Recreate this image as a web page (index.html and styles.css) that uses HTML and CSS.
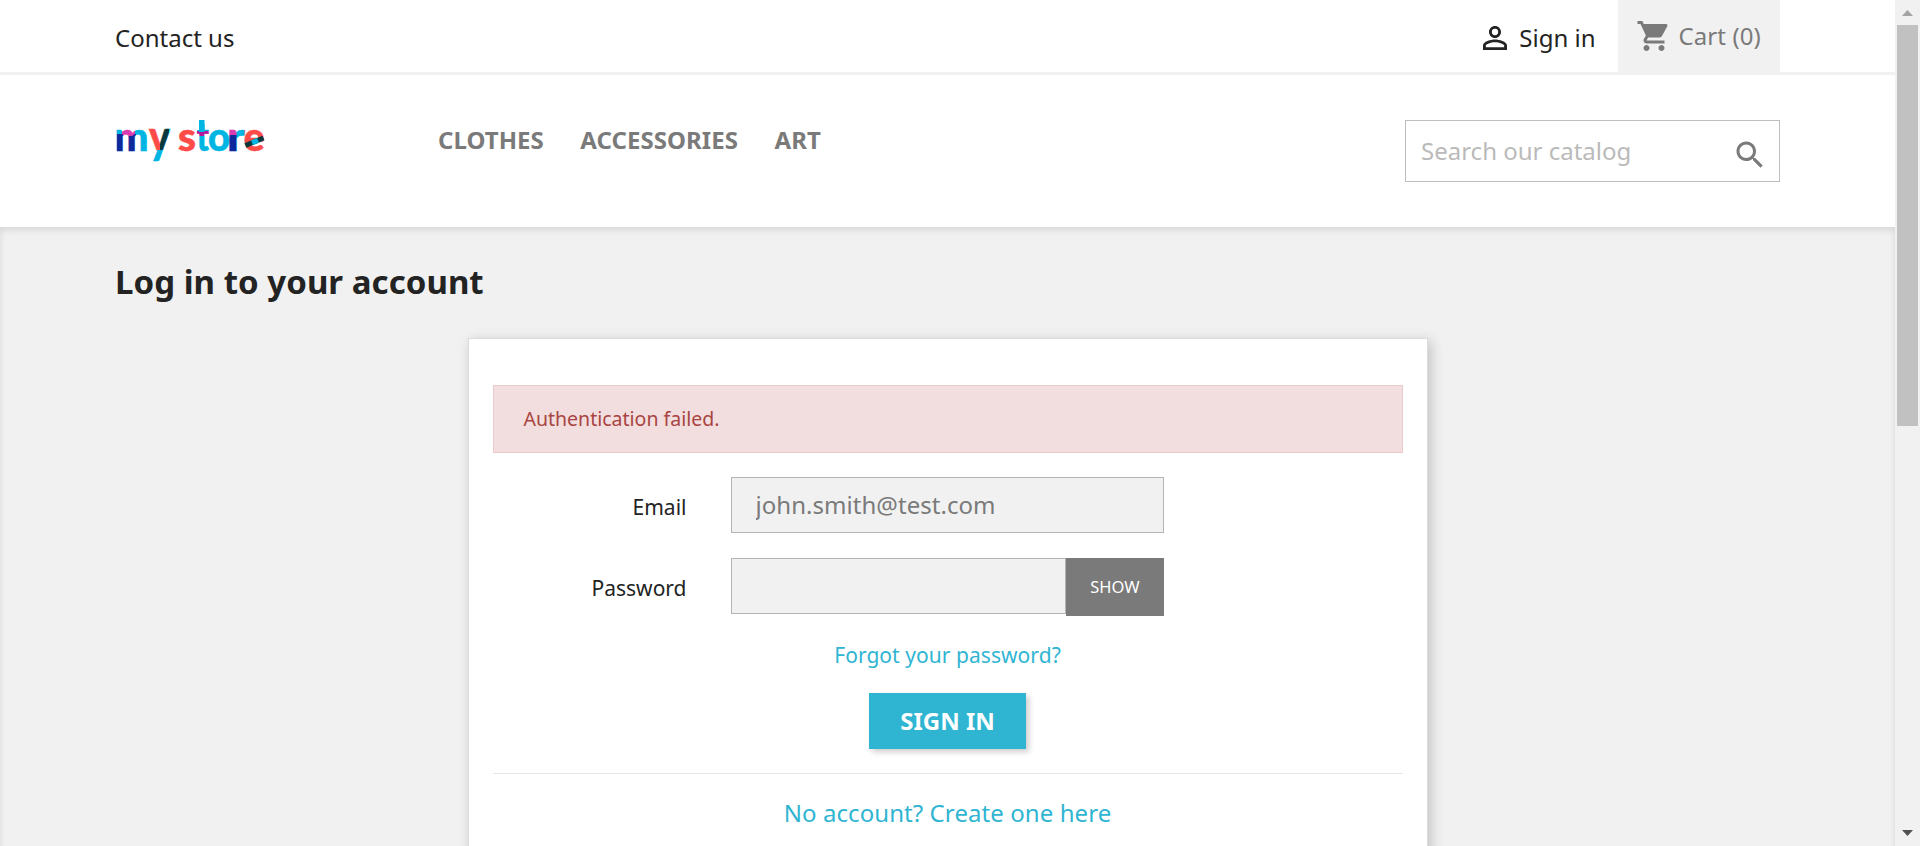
FILE: index.html
```html
<!DOCTYPE html>
<html lang="en">
<head>
<meta charset="utf-8">
<title>Login</title>
<link rel="stylesheet" href="styles.css">
</head>
<body>
<div class="viewport">
  <div class="page">
    <header class="header">
      <nav class="topbar">
        <a class="contact">Contact us</a>
        <div class="user">
          <a class="signin">
            <svg class="icon" viewBox="0 0 24 24"><path d="M12 5.9a2.1 2.1 0 1 1 0 4.2 2.1 2.1 0 0 1 0-4.2m0 9c2.970 0 6.100 1.460 6.100 2.100v1.100H5.900V17c0-.640 3.130-2.100 6.100-2.100M12 4C9.790 4 8 5.790 8 8s1.790 4 4 4 4-1.790 4-4-1.790-4-4-4zm0 9c-2.670 0-8 1.340-8 4v3h16v-3c0-2.660-5.330-4-8-4z"/></svg>
            <span>Sign in</span>
          </a>
          <a class="cart">
            <svg class="icon" viewBox="0 0 24 24"><path d="M7 18c-1.100 0-1.990.9-1.990 2S5.900 22 7 22s2-.9 2-2-.9-2-2-2zM1 2v2h2l3.600 7.590-1.350 2.450c-.160.280-.250.610-.250.960 0 1.100.9 2 2 2h12v-2H7.420c-.140 0-.250-.110-.250-.250l.030-.120.900-1.630h7.450c.750 0 1.410-.410 1.750-1.030l3.580-6.490c.080-.140.120-.310.120-.480 0-.550-.450-1-1-1H5.210l-.940-2H1zm16 16c-1.100 0-1.990.9-1.990 2s.890 2 1.990 2 2-.9 2-2-.9-2-2-2z"/></svg>
            <span>Cart (0)</span>
          </a>
        </div>
      </nav>
      <div class="mainbar">
        <svg class="logo" viewBox="0 0 150 60" role="img" aria-label="my store">
          <defs>
            <pattern id="ink" patternUnits="userSpaceOnUse" width="150" height="60">
              <rect width="150" height="60" fill="#00b5e2"/>
              <rect x="2" y="14" width="8" height="18" fill="#0c2a9c"/>
              <rect x="13" y="14" width="8" height="18" fill="#0c2a9c"/>
              <path d="M7 9h13v5l-3 2H9l-2-2z" fill="#d93cae"/>
              <rect x="33" y="8" width="12" height="22" fill="#ff4b47"/>
              <path d="M45 8h9v16l-5 6h-4z" fill="#07393f"/>
              <rect x="62" y="8" width="19" height="26" fill="#ff4b47"/>
              <rect x="82" y="11" width="12" height="5" fill="#b4199c"/>
              <rect x="114" y="15" width="7.500" height="20" fill="#0c2a9c"/>
              <rect x="114" y="8" width="7.500" height="7" fill="#d93cae"/>
              <rect x="129.500" y="8" width="20.500" height="26" fill="#ff4b47"/>
            </pattern>
          </defs>
          <g class="logo-text" fill="url(#ink)" stroke="url(#ink)">
            <text x="-0.500" y="30.500" textLength="34" lengthAdjust="spacingAndGlyphs">m</text>
            <text class="logo-y" x="34" y="33" textLength="21" lengthAdjust="spacingAndGlyphs">y</text>
            <text x="63" y="30.500" textLength="18" lengthAdjust="spacingAndGlyphs">s</text>
            <text x="81.500" y="30.500" textLength="12.500" lengthAdjust="spacingAndGlyphs">t</text>
            <text x="93" y="30.500" textLength="22" lengthAdjust="spacingAndGlyphs">o</text>
            <text x="112" y="30.500" textLength="18" lengthAdjust="spacingAndGlyphs">r</text>
            <text x="128.500" y="30.500" textLength="21" lengthAdjust="spacingAndGlyphs">e</text>
          </g>
          <path d="M84 0h5.500v12H84z" fill="#00b5e2"/>
          <path d="M130.500 25.500l18-7.500" stroke="#07393f" stroke-width="5"/>
          <path d="M137 22.800l6-2.500" stroke="#00b5e2" stroke-width="5"/>
        </svg>
        <ul class="menu">
          <li>CLOTHES</li>
          <li>ACCESSORIES</li>
          <li>ART</li>
        </ul>
        <form class="search">
          <input class="search-input" type="text" placeholder="Search our catalog" aria-label="Search">
          <svg class="icon" viewBox="0 0 24 24"><path d="M15.500 14h-.790l-.280-.270C15.410 12.590 16 11.110 16 9.500 16 5.910 13.090 3 9.500 3S3 5.910 3 9.500 5.910 16 9.500 16c1.610 0 3.090-.590 4.230-1.570l.270.280v.790l5 4.990L20.490 19l-4.990-5zm-6 0C7.010 14 5 11.990 5 9.500S7.010 5 9.500 5 14 7.010 14 9.500 11.990 14 9.500 14z"/></svg>
        </form>
      </div>
    </header>
    <main class="wrapper">
      <h1 class="title">Log in to your account</h1>
      <section class="card">
        <div class="alert">Authentication failed.</div>
        <form class="login">
          <label class="label" for="email">Email</label>
          <input class="field" id="email" type="text" value="john.smith@test.com">
          <label class="label" for="password">Password</label>
          <div class="group">
            <input class="field" id="password" type="password">
            <button class="show" type="button">SHOW</button>
          </div>
        </form>
        <a class="forgot">Forgot your password?</a>
        <button class="submit" type="button">SIGN IN</button>
        <hr class="rule">
        <a class="create">No account? Create one here</a>
      </section>
    </main>
  </div>
  <div class="scrollbar">
    <svg class="arrow arrow-up" viewBox="0 0 11 6"><path d="M0 6L5.500 0 11 6z"/></svg>
    <div class="thumb"></div>
    <svg class="arrow arrow-down" viewBox="0 0 11 6"><path d="M0 0L5.500 6 11 0z"/></svg>
  </div>
</div>
</body>
</html>
```

FILE: styles.css
```css
* { box-sizing: border-box; }

body {
  margin: 0;
  background: #f1f1f1;
  color: #232323;
  font-family: "Noto Sans", sans-serif;
  font-size: 24px;
  line-height: 30px;
}

input, button { font-family: inherit; border-radius: 0; margin: 0; }

.viewport { display: flex; height: 846px; overflow: hidden; }
.page { width: 1895px; height: 846px; overflow: hidden; display: flex; flex-direction: column; }

.header { background: #fff; flex: none; }
.icon { width: 36px; height: 36px; fill: currentColor; flex: none; }

.topbar {
  display: flex;
  justify-content: space-between;
  height: 75px;
  padding: 0 115px;
  border-bottom: 3px solid #f1f1f1;
}
.contact { padding-top: 23px; }
.user { display: flex; }
.signin { display: flex; padding: 23px 22.5px 0 0; }
.signin .icon { margin: -3px 6.5px 0 0; }
.cart {
  display: flex;
  width: 162px;
  height: 72px;
  padding: 21px 0 0 18px;
  background: #f1f1f1;
  color: #7a7a7a;
}
.cart .icon { margin: -3px 6.5px 0 0; }
.cart span { letter-spacing: 0.1px; }

.mainbar { display: flex; height: 152px; padding: 45px 115px 0; }
.logo { width: 150px; height: 60px; margin: 0 172px 0 0; overflow: visible; }
.logo-text { font: 900 39px/1 "Lato", sans-serif; stroke-width: 0.5px; }
.logo-y { font-size: 45px; }
.menu {
  display: flex;
  gap: 36.5px;
  margin: 5px 0 0 1px;
  padding: 0;
  list-style: none;
  color: #7a7a7a;
  font-weight: 700;
  letter-spacing: 0.05px;
}
.search {
  display: flex;
  width: 375px;
  height: 62px;
  margin-left: auto;
  padding-right: 11px;
  border: 1px solid #bdbdbd;
  color: #7a7a7a;
}
.search-input {
  flex: 1;
  min-width: 0;
  padding: 0 0 2px 15px;
  border: 0;
  font-size: 24px;
  color: #7a7a7a;
}
.search-input::placeholder { color: #bababa; opacity: 1; }
.search .icon { margin-top: 16px; }

.wrapper {
  flex: 1;
  padding: 37px 115px 0;
  background: #f1f1f1;
  box-shadow: inset 0 3px 7.5px rgba(0, 0, 0, 0.11);
}
.title { margin: 0; font-size: 33px; line-height: 36px; font-weight: 700; letter-spacing: 0.04px; }

.card {
  display: flex;
  flex-direction: column;
  align-items: center;
  width: 960px;
  height: 800px;
  margin: 38px auto 0;
  padding: 46px 24px 0;
  background: #fff;
  border: 1px solid #dcdcdc;
  box-shadow: 3px 3px 12px rgba(0, 0, 0, 0.2);
}
.alert {
  width: 100%;
  height: 68px;
  padding: 18px 30px;
  background: #f2dede;
  border: 1px solid #ebcccc;
  color: #a94442;
  font-size: 19.5px;
}
.login {
  display: grid;
  grid-template-columns: 194px 433px;
  column-gap: 44px;
  row-gap: 25px;
  align-self: flex-start;
  margin-top: 24px;
}
.label { padding-top: 15px; text-align: right; font-size: 21px; }
.field {
  width: 433px;
  height: 56px;
  padding: 0 24px 2px;
  background: #f1f1f1;
  border: 1px solid #b4b4b4;
  color: #7a7a7a;
  font-size: 24px;
  letter-spacing: 0.04px;
}
.group { display: flex; height: 58px; }
.group .field { width: 335px; }
.show {
  width: 98px;
  padding: 0 0 2px 1px;
  border: 0;
  background: #7a7a7a;
  color: #fff;
  font-size: 16.5px;
}
.forgot { margin-top: 24px; color: #2fb5d2; font-size: 21px; letter-spacing: 0.05px; }
.submit {
  width: 157px;
  height: 56px;
  margin-top: 23px;
  padding: 0 0 2px;
  border: 0;
  background: #2fb5d2;
  box-shadow: 3px 3px 6px rgba(0, 0, 0, 0.2);
  color: #fff;
  font-size: 24px;
  font-weight: 700;
}
.rule { width: 100%; height: 1px; margin: 24px 0; border: 0; background: #e5e5e5; }
.create { color: #2fb5d2; letter-spacing: 0.08px; }

.scrollbar {
  display: flex;
  flex-direction: column;
  align-items: center;
  width: 25px;
  height: 846px;
  background: #f1f1f1;
}
.arrow { width: 11px; height: 6px; }
.arrow-up { margin: 10px 0 9px; fill: #a3a3a3; }
.thumb { width: 21px; height: 401px; background: #c1c1c1; }
.arrow-down { margin: auto 0 10px; fill: #505050; }
```
